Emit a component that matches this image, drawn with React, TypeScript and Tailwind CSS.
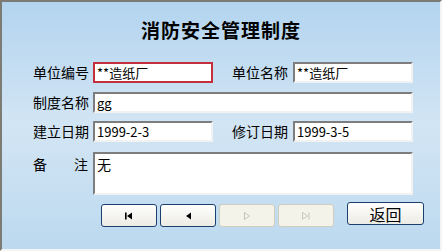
import React from "react";

const FONT = { fontFamily: '"Noto Sans CJK SC", "DejaVu Sans", sans-serif' };

function Field({ value, width, focused }: { value: string; width: string; focused?: boolean }) {
  return (
    <div
      className={`${width} h-[21px] bg-white flex items-center pl-[2px] text-[13px] leading-none text-black border-2 ${
        focused
          ? "border-[#c42f3e]"
          : "border-t-[#7d7d7d] border-l-[#7d7d7d] border-r-[#f2f2f2] border-b-[#f2f2f2]"
      }`}
    >
      {value}
    </div>
  );
}

function NavButton({ kind, disabled }: { kind: "first" | "prev" | "next" | "last"; disabled?: boolean }) {
  const fill = disabled ? "none" : "#000";
  const stroke = disabled ? "#c4c2b4" : "#000";
  return (
    <button
      disabled={disabled}
      className={`w-[56px] h-[23px] rounded-[3px] border flex items-center justify-center ${
        disabled
          ? "border-[#cfcdbf] bg-[#f4f3ea]"
          : "border-[#1c3f6e] bg-gradient-to-b from-white to-[#ecebe4]"
      }`}
    >
      <svg width="10" height="8" viewBox="0 0 10 8">
        {kind === "first" && (
          <>
            <rect x="1" y="0.5" width="1.6" height="7" fill="#000" />
            <polygon points="8,0.5 8,7.5 3,4" fill="#000" />
          </>
        )}
        {kind === "prev" && <polygon points="8,0.5 8,7.5 3,4" fill="#000" />}
        {kind === "next" && (
          <polyline points="2.5,0.5 2.5,7.5 2.5,0.5 7.5,4 3,7" fill={fill} stroke={stroke} strokeWidth="0.9" />
        )}
        {kind === "last" && (
          <>
            <polyline points="1.5,7.5 1.5,0.5 6.5,4 2,7" fill="none" stroke={stroke} strokeWidth="0.9" />
            <line x1="8" y1="0.5" x2="8" y2="7.5" stroke={stroke} strokeWidth="0.9" />
          </>
        )}
      </svg>
    </button>
  );
}

export default function App() {
  return (
    <div
      style={FONT}
      className="w-[442px] h-[251px] border-2 border-t-[#7c7c74] border-l-[#7c7c74] border-r-[#f4f4f4] border-b-[#f4f4f4] bg-gradient-to-b from-[#b3d4ef] via-[#d2e5f4] to-[#bcd9ef] text-black"
    >
      {/* title */}
      <div className="pt-[15px] h-[41px] text-center text-[19px] leading-[26px] font-bold tracking-[1px]">
        消防安全管理制度
      </div>

      <div className="pl-[31px] mt-[19px] flex flex-col text-[14px]">
        {/* row 1 */}
        <div className="flex items-center h-[21px]">
          <span className="w-[60px]">单位编号</span>
          <Field value="**造纸厂" width="w-[120px]" focused />
          <span className="w-[80px] text-right pr-[5px]">单位名称</span>
          <Field value="**造纸厂" width="w-[120px]" />
        </div>

        {/* row 2 */}
        <div className="flex items-center h-[21px] mt-[9px]">
          <span className="w-[60px]">制度名称</span>
          <Field value="gg" width="w-[320px]" />
        </div>

        {/* row 3 */}
        <div className="flex items-center h-[21px] mt-[8px]">
          <span className="w-[60px]">建立日期</span>
          <Field value="1999-2-3" width="w-[120px]" />
          <span className="w-[80px] text-right pr-[5px]">修订日期</span>
          <Field value="1999-3-5" width="w-[120px]" />
        </div>

        {/* row 4 */}
        <div className="flex items-start mt-[10px]">
          <span className="w-[55px] mr-[5px] flex justify-between pt-[2px]">
            <span>备</span>
            <span>注</span>
          </span>
          <div className="w-[320px] h-[43px] bg-white pl-[2px] pt-[1px] text-[14px] leading-[18px] border-2 border-t-[#7d7d7d] border-l-[#7d7d7d] border-r-[#f2f2f2] border-b-[#f2f2f2]">
            无
          </div>
        </div>

        {/* buttons */}
        <div className="flex items-start mt-[7px] pl-[68px]">
          <div className="flex gap-[3px] mt-[2px]">
            <NavButton kind="first" />
            <NavButton kind="prev" />
            <NavButton kind="next" disabled />
            <NavButton kind="last" disabled />
          </div>
          <button className="ml-[13px] w-[77px] h-[23px] rounded-[3px] border border-[#1c3f6e] bg-gradient-to-b from-white to-[#ecebe4] text-[16px] leading-none flex items-center justify-center">
            返回
          </button>
        </div>
      </div>
    </div>
  );
}
